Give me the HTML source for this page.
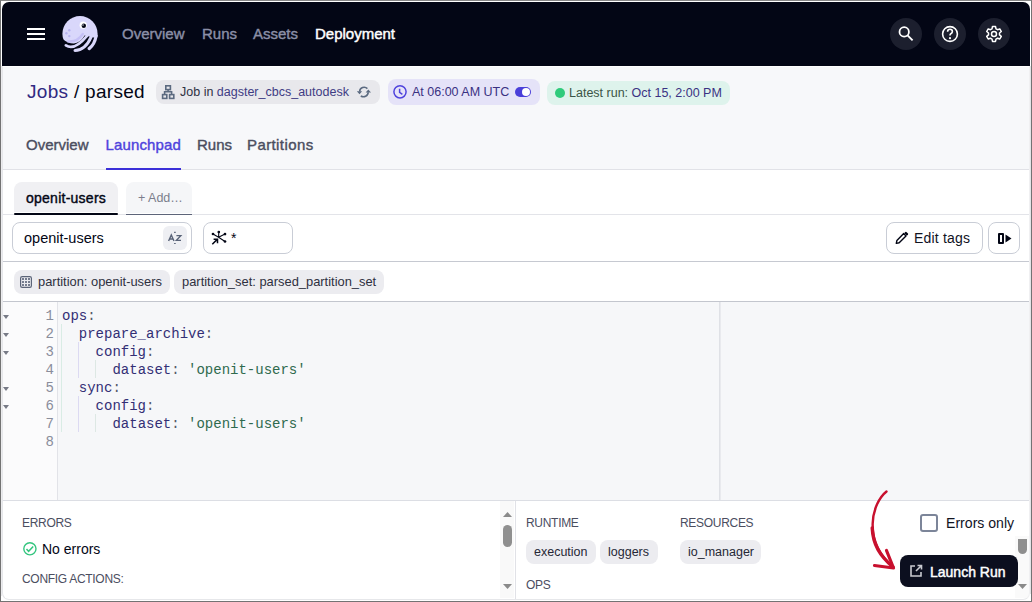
<!DOCTYPE html>
<html><head><meta charset="utf-8">
<style>
*{box-sizing:border-box;margin:0;padding:0}
html,body{width:1032px;height:602px;overflow:hidden;background:#fff;font-family:"Liberation Sans",sans-serif;color:#030615}
.a{position:absolute;white-space:nowrap}
#frame{position:absolute;left:0;top:0;width:1032px;height:602px;border:1px solid #737373;border-top-color:#878787;background:#fff}
#app{position:absolute;left:2px;top:2px;width:1028px;height:598px;border-radius:7px;overflow:hidden;background:#fff}
#pg{position:absolute;left:-2px;top:-2px;width:1032px;height:602px}
#bord{position:absolute;left:2px;top:66px;width:1028px;height:534px;border:1px solid #e6e7ea;border-top:none;border-right-color:#f0f0f2;border-radius:0 0 7px 7px}
#lb{position:absolute;left:1px;top:66px;width:1px;height:530px;background:#ececee}
#rb{position:absolute;left:1030px;top:66px;width:1px;height:528px;background:#e4e4e6}
.nav{position:absolute;top:2px;height:64px;line-height:64px;font-size:15px;font-weight:400;color:#8b8fa7;-webkit-text-stroke:0.4px #8b8fa7}
.circ{position:absolute;top:18px;width:32px;height:32px;border-radius:50%;background:#1c1f2e}
.circ svg{position:absolute;left:6px;top:6px}
.badge{position:absolute;top:80px;height:24px;border-radius:8px;font-size:12.5px;line-height:24px}
.badge svg{position:absolute}
.tab{position:absolute;top:131px;height:28px;line-height:28px;font-size:15px;font-weight:400;color:#4b4e5f;-webkit-text-stroke:0.4px #4b4e5f}
.hl{position:absolute;height:1px}
.chip{position:absolute;height:24px;line-height:24px;border-radius:8px;background:#ececf0;font-size:12.9px;color:#2e3040}
.btn{position:absolute;top:222px;height:32px;border:1px solid #c9cdd6;border-radius:8px;background:#fff}
.code{position:absolute;left:0;font-family:"Liberation Mono",monospace;font-size:14px;line-height:18px}
.ln{position:absolute;left:0;width:54px;text-align:right;font-family:"Liberation Mono",monospace;font-size:14px;line-height:18px;color:#8a8d9b}
.k{color:#332f75}.s{color:#2f6a4e}.p{color:#555a6a}
.sec{position:absolute;font-size:12px;letter-spacing:-0.3px;color:#4b4e5f;line-height:14px}
</style></head><body>
<div id="frame"></div>
<div id="app"><div id="pg">
  <!-- ===== top header ===== -->
  <div class="a" style="left:0;top:0;width:1032px;height:66px;background:#030615"></div>
  <div class="a" style="left:27px;top:28px;width:18px;height:2px;background:#fff"></div>
  <div class="a" style="left:27px;top:33px;width:18px;height:2px;background:#fff"></div>
  <div class="a" style="left:27px;top:38px;width:18px;height:2px;background:#fff"></div>
  <svg class="a" style="left:62px;top:16px" width="36" height="36" viewBox="0 0 36 36">
    <defs><clipPath id="hc"><path d="M-1 -1 H37 V21.5 L31.6 21.6 L27.3 20.6 L22.6 19.6 Q18.2 27.4 11.8 27.4 Q5.5 27.5 -1 21.5 Z"/></clipPath></defs>
    <circle cx="18" cy="17.7" r="17.6" fill="#d9d7fb" clip-path="url(#hc)"/>
    <path d="M6 25.4 Q15 26.5 20.8 18" stroke="#c5c0f6" stroke-width="2.4" fill="none" stroke-linecap="round"/>
    <g stroke="#d9d7fb" fill="none" stroke-linecap="round">
      <path d="M3.9 29.3 Q12.4 35 25 19.8" stroke-width="2.7"/>
      <path d="M13 34.5 Q23.3 34.3 29.3 20.6" stroke-width="3"/>
      <path d="M27.2 32.6 Q32.4 29 34.2 19.8" stroke-width="3.2"/>
    </g>
    <circle cx="21.2" cy="9.2" r="3.6" fill="#fff"/>
    <circle cx="21.8" cy="9.8" r="2.2" fill="#030615"/>
    <circle cx="21" cy="9" r="0.7" fill="#fff"/>
    <circle cx="7.3" cy="14.3" r="1.2" fill="#b9b5f1"/>
    <circle cx="4.4" cy="17.2" r="1.2" fill="#b9b5f1"/>
    <circle cx="7.3" cy="20.1" r="1.2" fill="#b9b5f1"/>
  </svg>
  <div class="nav" style="left:122px">Overview</div>
  <div class="nav" style="left:202px">Runs</div>
  <div class="nav" style="left:253px">Assets</div>
  <div class="nav" style="left:315px;color:#fff;-webkit-text-stroke:0.45px #fff">Deployment</div>
  <div class="circ" style="left:890px"><svg width="20" height="20" viewBox="0 0 20 20"><circle cx="8.2" cy="7.9" r="4.7" stroke="#fff" stroke-width="1.8" fill="none"/><path d="M11.6 11.3 L16.6 16.3" stroke="#fff" stroke-width="1.9" stroke-linecap="butt"/></svg></div>
  <div class="circ" style="left:934px"><svg width="20" height="20" viewBox="0 0 20 20"><circle cx="10" cy="10" r="7.4" stroke="#fff" stroke-width="1.6" fill="none"/><path d="M7.6 7.8 Q7.6 5.3 10 5.3 Q12.4 5.3 12.4 7.6 Q12.4 9 10.8 9.8 Q10 10.3 10 11.6" stroke="#fff" stroke-width="1.6" fill="none"/><circle cx="10" cy="14.2" r="1.1" fill="#fff"/></svg></div>
  <div class="circ" style="left:978px"><svg width="20" height="20" viewBox="0 0 20 20"><path d="M8.5 2.5h3l.5 2.3 1.6.9 2.2-.8 1.5 2.6-1.8 1.5v1.9l1.8 1.5-1.5 2.6-2.2-.8-1.6.9-.5 2.3h-3l-.5-2.3-1.6-.9-2.2.8-1.5-2.6 1.8-1.5V9l-1.8-1.5 1.5-2.6 2.2.8 1.6-.9z" stroke="#fff" stroke-width="1.5" fill="none" stroke-linejoin="round"/><circle cx="10" cy="10" r="2.5" stroke="#fff" stroke-width="1.5" fill="none"/></svg></div>

  <!-- ===== page header ===== -->
  <div class="a" style="left:0;top:67px;width:1032px;height:102px;background:#f7f8fa"></div>
  <div class="hl" style="left:0;top:169px;width:1032px;background:#e1e2e7"></div>
  <div class="a" style="left:27px;top:77px;font-size:19px;line-height:30px;letter-spacing:0.3px"><span style="color:#302a82">Jobs</span> / parsed</div>

  <div class="badge a" style="left:156px;width:224px;background:#e8e8ec;padding-left:24px;color:#2f3142">Job in <span style="color:#3f3c84">dagster_cbcs_autodesk</span></div>
  <svg class="a" style="left:161px;top:84px" width="15" height="16" viewBox="0 0 15 16" fill="none" stroke="#5b6a80" stroke-width="1.6">
    <rect x="4.8" y="1.8" width="4.6" height="3.8"/><path d="M7.1 5.6 V7.8 M3.6 10.5 V7.8 H10.6 V10.5"/>
    <rect x="1.6" y="10.6" width="4.2" height="3.8"/><rect x="8.6" y="10.6" width="4.2" height="3.8"/>
  </svg>
  <svg class="a" style="left:356px;top:85px" width="16" height="14" viewBox="0 0 16 14" fill="none" stroke="#5b6a80" stroke-width="1.6">
    <path d="M3.6 6.6 A4.6 4.6 0 0 1 11.4 3.6"/><path d="M12.2 7.2 A4.6 4.6 0 0 1 4.8 10.8"/>
  </svg>
  <svg class="a" style="left:356px;top:85px" width="16" height="14" viewBox="0 0 16 14" fill="#5b6a80">
    <path d="M0.8 6.2 H6.2 L3.5 9.2 Z"/><path d="M9.6 7.6 H15 L12.3 4.6 Z"/>
  </svg>
  <div class="a" style="left:388px;top:79px;width:152px;height:26px;background:#e5e3f8;border-radius:8px"></div>
  <div class="badge a" style="left:388px;top:80px;width:152px;padding-left:24px;color:#3a3182">At 06:00 AM UTC</div>
  <svg class="a" style="left:392px;top:84px" width="16" height="16" viewBox="0 0 16 16" fill="none" stroke="#4f43dd" stroke-width="1.5">
    <circle cx="8" cy="7.8" r="6.1"/><path d="M7.6 4.8 V8.4 L10.4 10.3"/>
  </svg>
  <div class="a" style="left:515px;top:87px;width:16px;height:10px;border-radius:5px;background:#4a3fd9"></div>
  <div class="a" style="left:522px;top:88px;width:8px;height:8px;border-radius:50%;background:#fff"></div>
  <div class="badge a" style="left:547px;top:81px;width:183px;background:#def3ec;padding-left:22px;color:#3b5546">Latest run: <span style="color:#3a3182">Oct 15, 2:00 PM</span></div>
  <div class="a" style="left:555px;top:88px;width:10px;height:10px;border-radius:50%;background:#2fcb7b"></div>

  <div class="tab" style="left:26px">Overview</div>
  <div class="tab" style="left:105.5px;letter-spacing:0.15px;color:#4f43dd;-webkit-text-stroke:0.4px #4f43dd">Launchpad</div>
  <div class="a" style="left:106px;top:168px;width:75px;height:2px;background:#3b30d8"></div>
  <div class="tab" style="left:197px">Runs</div>
  <div class="tab" style="left:247px;letter-spacing:0.4px">Partitions</div>

  <!-- ===== tab row ===== -->
  <div class="hl" style="left:0;top:214px;width:1032px;background:#e3e4e9"></div>
  <div class="a" style="left:14px;top:182px;width:104px;height:30px;background:#f0f0f3;border-radius:8px 8px 0 0"></div>
  <div class="a" style="left:14px;top:213px;width:104px;height:2px;background:#030615;border-radius:1px"></div>
  <div class="a" style="left:26px;top:188px;font-size:14px;line-height:20px;letter-spacing:0.25px;-webkit-text-stroke:0.4px #030615">openit-users</div>
  <div class="a" style="left:126px;top:182px;width:66px;height:31px;background:#f5f6f8;border-radius:8px 8px 0 0"></div>
  <div class="a" style="left:126px;top:214px;width:66px;height:1px;background:#5d6479"></div>
  <div class="a" style="left:138px;top:188px;font-size:12.5px;line-height:20px;color:#7b7e8c">+ Add…</div>

  <!-- ===== input row ===== -->
  <div class="btn" style="left:12px;width:180px"></div>
  <div class="a" style="left:24px;top:228px;font-size:14.5px;line-height:20px;color:#030615">openit-users</div>
  <div class="a" style="left:163px;top:226px;width:24px;height:24px;background:#eeeff3;border-radius:6px"></div>
  <svg class="a" style="left:163px;top:226px" width="24" height="24" viewBox="0 0 24 24">
    <path d="M5.6 15 L8.3 8.9 L11 15 M6.6 13 H10" stroke="#596378" stroke-width="1.4" fill="none"/>
    <path d="M13.4 9.6 H17.8 L13.4 14.4 H18" stroke="#596378" stroke-width="1.4" fill="none"/>
    <path d="M11.1 6.4 H12.7 M11.1 17.5 H12.7" stroke="#596378" stroke-width="1.2"/>
  </svg>
  <div class="btn" style="left:203px;width:90px"></div>
  <svg class="a" style="left:210px;top:229px" width="18" height="18" viewBox="0 0 18 18">
    <path d="M8.6 8.3 L8.8 3 M8.6 8.3 L3 5 M8.6 8.3 L15 5.1 M8.6 8.3 L15 12.5" stroke="#030615" stroke-width="1.1" fill="none"/>
    <circle cx="8.8" cy="3" r="1.35" fill="#030615"/><circle cx="3" cy="5" r="1.35" fill="#030615"/><circle cx="15" cy="5.1" r="1.35" fill="#030615"/><circle cx="15" cy="12.5" r="1.35" fill="#030615"/>
    <path d="M2.3 15.3 L7.5 10.1 M3.6 10.3 H7.5 V14.2" stroke="#030615" stroke-width="1.5" fill="none"/>
  </svg>
  <div class="a" style="left:231px;top:231px;font-size:14px;line-height:14px;color:#030615">*</div>
  <div class="btn" style="left:886px;width:97px"></div>
  <svg class="a" style="left:894px;top:230px" width="16" height="16" viewBox="0 0 16 16">
    <path d="M2.3 13.4 L2.9 10.4 L9.7 3.6 L12 5.9 L5.2 12.7 Z" stroke="#030615" stroke-width="1.4" fill="none" stroke-linejoin="round"/>
    <path d="M10.3 3.1 L11.4 2 Q11.9 1.6 12.4 2 L14 3.6 Q14.4 4.1 14 4.6 L12.9 5.7 Z" fill="#030615"/>
  </svg>
  <div class="a" style="left:914px;top:228px;font-size:14px;line-height:20px;letter-spacing:0.2px;color:#11131f">Edit tags</div>
  <div class="btn" style="left:988px;width:32px"></div>
  <div class="a" style="left:998px;top:233px;width:6px;height:11px;border:2px solid #030615;border-radius:1px"></div>
  <svg class="a" style="left:1005px;top:234px" width="8" height="9" viewBox="0 0 8 9"><path d="M0.5 0.5 L6.5 4.5 L0.5 8.5 Z" fill="#030615"/></svg>
  <div class="hl" style="left:0;top:261px;width:1032px;background:#c6c9d1"></div>

  <!-- ===== tags row ===== -->
  <div class="chip" style="left:14px;top:270px;width:156px;padding-left:24px">partition: openit-users</div>
  <svg class="a" style="left:20px;top:276px" width="12" height="12" viewBox="0 0 12 12">
    <rect x="0.6" y="0.6" width="10.8" height="10.8" rx="1.6" stroke="#5b6478" stroke-width="1.2" fill="none"/>
    <g fill="#767d8f"><rect x="2" y="2" width="2" height="2"/><rect x="5" y="2" width="2" height="2"/><rect x="8" y="2" width="2" height="2"/><rect x="2" y="5" width="2" height="2"/><rect x="5" y="5" width="2" height="2"/><rect x="8" y="5" width="2" height="2"/><rect x="2" y="8" width="2" height="2"/><rect x="5" y="8" width="2" height="2"/><rect x="8" y="8" width="2" height="2"/></g>
  </svg>
  <div class="chip" style="left:174px;top:270px;width:210px;padding-left:8px">partition_set: parsed_partition_set</div>
  <div class="hl" style="left:0;top:301px;width:1032px;background:#c3c6ce"></div>

  <!-- ===== editor ===== -->
  <div class="a" style="left:0;top:302px;width:1032px;height:198px;background:#f6f7f9"></div>
  <div class="a" style="left:0;top:302px;width:57px;height:198px;background:#fbfbfc"></div>
  <div class="a" style="left:57px;top:302px;width:1px;height:198px;background:#e2e3e8"></div>
  <div class="a" style="left:719px;top:302px;width:1px;height:198px;background:#dfe1e6"></div><div class="a" style="left:720px;top:302px;width:1px;height:198px;background:#e9eaee"></div>
  <div class="a" style="left:61px;top:324px;width:1px;height:108px;background:#d9ece5"></div>
  <div class="a" style="left:78px;top:342px;width:1px;height:36px;background:#dcdaf2"></div>
  <div class="a" style="left:78px;top:396px;width:1px;height:36px;background:#dcdaf2"></div>
  <div class="a" style="left:95px;top:360px;width:1px;height:18px;background:#dde8e4"></div>
  <div class="a" style="left:95px;top:414px;width:1px;height:18px;background:#dde8e4"></div>
  <div class="ln" style="top:307px">1<br>2<br>3<br>4<br>5<br>6<br>7<br>8</div>
  <svg class="a" style="left:3px;top:307px" width="7" height="144" viewBox="0 0 7 144" fill="#777a86">
    <path d="M0 8 H6 L3 12 Z"/><path d="M0 26 H6 L3 30 Z"/><path d="M0 44 H6 L3 48 Z"/><path d="M0 80 H6 L3 84 Z"/><path d="M0 98 H6 L3 102 Z"/>
  </svg>
  <div class="code" style="left:62px;top:307px;white-space:pre"><span class="k">ops</span><span class="p">:</span>
  <span class="k">prepare_archive</span><span class="p">:</span>
    <span class="k">config</span><span class="p">:</span>
      <span class="k">dataset</span><span class="p">:</span> <span class="s">'openit-users'</span>
  <span class="k">sync</span><span class="p">:</span>
    <span class="k">config</span><span class="p">:</span>
      <span class="k">dataset</span><span class="p">:</span> <span class="s">'openit-users'</span>
</div>
  <div class="hl" style="left:0;top:500px;width:1032px;background:#dcdee4"></div>

  <!-- ===== bottom panel ===== -->
  <div class="sec" style="left:22px;top:516px">ERRORS</div>
  <svg class="a" style="left:22px;top:541px" width="16" height="16" viewBox="0 0 16 16">
    <circle cx="7.9" cy="7.8" r="6.1" stroke="#34c57f" stroke-width="1.4" fill="none"/>
    <path d="M4.5 8 L6.6 10.3 L11.2 5.4" stroke="#34c57f" stroke-width="1.5" fill="none"/>
  </svg>
  <div class="a" style="left:42px;top:539px;font-size:14px;line-height:20px">No errors</div>
  <div class="sec" style="left:22px;top:572px">CONFIG ACTIONS:</div>
  <div class="a" style="left:500px;top:501px;width:14px;height:97px;background:#f9f9f9"></div>
  <svg class="a" style="left:503px;top:512px" width="9" height="5" viewBox="0 0 9 5"><path d="M0 5 L4.5 0 L9 5 Z" fill="#8a8a8a"/></svg>
  <div class="a" style="left:503px;top:525px;width:9px;height:22px;border-radius:4.5px;background:#8f8f8f"></div>
  <svg class="a" style="left:503px;top:584px" width="9" height="5" viewBox="0 0 9 5"><path d="M0 0 L9 0 L4.5 5 Z" fill="#8a8a8a"/></svg>
  <div class="a" style="left:515px;top:501px;width:1px;height:98px;background:#e1e2e7"></div>

  <div class="sec" style="left:526px;top:516px">RUNTIME</div>
  <div class="chip" style="left:526px;top:540px;width:70px;padding-left:8px;color:#262836;font-size:12.5px">execution</div>
  <div class="chip" style="left:600px;top:540px;width:58px;padding-left:8px;color:#262836;font-size:12.5px">loggers</div>
  <div class="sec" style="left:526px;top:578px">OPS</div>
  <div class="sec" style="left:680px;top:516px">RESOURCES</div>
  <div class="chip" style="left:680px;top:540px;width:81px;padding-left:8px;color:#262836;font-size:12.5px">io_manager</div>

  <div class="a" style="left:1015px;top:536px;width:14px;height:62px;background:#fafafa"></div>
  <div class="a" style="left:920px;top:514px;width:18px;height:18px;border:2px solid #7c8599;border-radius:3px;background:#fff"></div>
  <div class="a" style="left:946px;top:513px;font-size:14.1px;line-height:20px;color:#11131f">Errors only</div>
    <div class="a" style="left:1018px;top:539px;width:9px;height:15px;border-radius:0 0 4.5px 4.5px;background:#8f8f8f"></div>
  <svg class="a" style="left:1018px;top:584px" width="9" height="5" viewBox="0 0 9 5"><path d="M0 0 L9 0 L4.5 5 Z" fill="#8a8a8a"/></svg>

  <div class="a" style="left:900px;top:555px;width:118px;height:32px;border-radius:8px;background:#0c0f1f"></div>
  <svg class="a" style="left:909px;top:564px" width="14" height="14" viewBox="0 0 14 14">
    <path d="M6 2 H2 V12 H12 V8" stroke="#c9cad0" stroke-width="1.6" fill="none"/>
    <path d="M7 7 L12.2 1.8 M8.5 1.5 H12.5 V5.5" stroke="#c9cad0" stroke-width="1.6" fill="none"/>
  </svg>
  <div class="a" style="left:930px;top:561.5px;font-size:14px;line-height:20px;color:#fff;-webkit-text-stroke:0.45px #fff">Launch Run</div>

  <svg class="a" style="left:860px;top:485px" width="45" height="90" viewBox="860 485 45 90">
    <path d="M886.5 491.5 C872 503 862 540 893 567" stroke="#c8102e" stroke-width="2.4" fill="none" stroke-linecap="round"/>
    <path d="M872.2 528 C873 545 880 556 893 567" stroke="#c8102e" stroke-width="3.4" fill="none" stroke-linecap="round"/>
    <path d="M874.5 565.5 L893.5 568 L886.5 550.5" stroke="#c8102e" stroke-width="3.2" fill="none" stroke-linecap="round" stroke-linejoin="round"/>
  </svg>
</div></div>
<div id="bord"></div><div id="lb"></div><div id="rb"></div>
</body></html>
